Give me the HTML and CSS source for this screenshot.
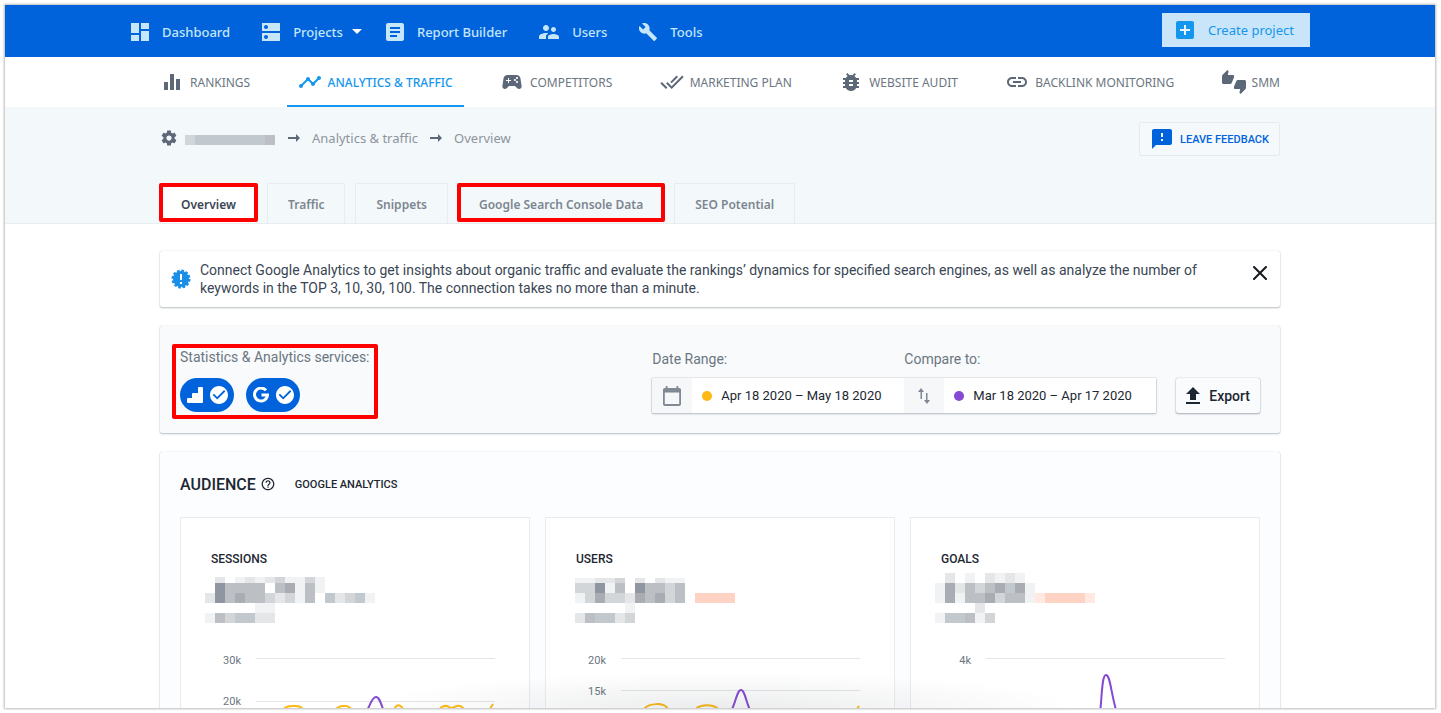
FILE: index.html
```html
<!DOCTYPE html>
<html lang="en">
<head>
  <meta charset="UTF-8" />
  <meta name="viewport" content="width=device-width, initial-scale=1.0"/>
  <title>Analytics &amp; Traffic - Overview</title>
  <link rel="stylesheet" href="styles.css">
</head>
<body>
  <div class="frame">
    <!-- Top bar -->
    <header class="topbar">
      <div class="topbar-inner">
        <nav class="main-nav">
          <a href="#"><svg width="18" height="18" viewBox="3 3 18 18"><path d="M3 13h8V3H3v10zm0 8h8v-6H3v6zm10 0h8V11h-8v10zm0-18v6h8V3h-8z"/></svg>Dashboard</a>
          <a href="#" class="has-menu"><svg width="18" height="18" viewBox="3 3 18 18"><path d="M21 13H3v8h18v-8zM7 19c-1.1 0-2-.9-2-2s.9-2 2-2 2 .9 2 2-.9 2-2 2zM21 3H3v8h18V3zM7 9c-1.1 0-2-.9-2-2s.9-2 2-2 2 .9 2 2-.9 2-2 2z"/></svg>Projects<svg class="caret" width="10" height="5" viewBox="0 0 10 5"><path d="M0 0h10L5 5z"/></svg></a>
          <a href="#"><svg width="18" height="18" viewBox="3 3 18 18"><path d="M19 3H5c-1.1 0-2 .9-2 2v14c0 1.1.9 2 2 2h14c1.1 0 2-.9 2-2V5c0-1.1-.9-2-2-2zm-5 14H7v-2h7v2zm3-4H7v-2h10v2zm0-4H7V7h10v2z"/></svg>Report Builder</a>
          <a href="#"><svg width="20" height="20" viewBox="2 2 20 20"><path d="M16.5 12c1.38 0 2.49-1.12 2.49-2.5S17.88 7 16.5 7C15.12 7 14 8.12 14 9.5s1.12 2.5 2.5 2.5zM9 11c1.66 0 2.99-1.34 2.99-3S10.66 5 9 5C7.34 5 6 6.34 6 8s1.34 3 3 3zm7.5 3c-1.83 0-5.5.92-5.5 2.75V19h11v-2.25c0-1.83-3.67-2.75-5.5-2.75zM9 13c-2.33 0-7 1.17-7 3.5V19h7v-2.25c0-.85.33-2.34 2.37-3.47C10.5 13.1 9.66 13 9 13z"/></svg>Users</a>
          <a href="#"><svg width="18" height="18" viewBox="1 1 22 22"><path d="M22.7 19l-9.1-9.1c.9-2.3.4-5-1.5-6.9-2-2-5-2.4-7.4-1.3L9 6 6 9 1.6 4.7C.4 7.1.9 10.1 2.9 12.1c1.9 1.9 4.6 2.4 6.9 1.5l9.1 9.1c.4.4 1 .4 1.4 0l2.3-2.3c.5-.4.5-1.1.1-1.4z"/></svg>Tools</a>
        </nav>
        <button class="create-btn"><svg width="18" height="18" viewBox="0 0 18 18"><rect width="18" height="18" rx="2" fill="#1596ee"/><path d="M8 4h2v4h4v2h-4v4H8v-4H4V8h4z" fill="#e9f5fd"/></svg>Create project</button>
      </div>
    </header>

    <!-- Section nav -->
    <nav class="sub-nav">
      <div class="sub-nav-inner">
        <a href="#"><svg width="24" height="24" viewBox="0 0 24 24"><path d="M4 12h4v8H4zM10 4h4v16h-4zM16 9h4v11h-4z"/></svg>RANKINGS</a>
        <a href="#" class="active"><svg width="24" height="24" viewBox="0 0 24 24"><path d="M23 8c0 1.1-.9 2-2 2-.18 0-.35-.02-.51-.07l-3.56 3.55c.05.16.07.34.07.52 0 1.1-.9 2-2 2s-2-.9-2-2c0-.18.02-.36.07-.52l-2.55-2.55c-.16.05-.34.07-.52.07s-.36-.02-.52-.07l-4.55 4.56c.05.16.07.33.07.51 0 1.1-.9 2-2 2s-2-.9-2-2 .9-2 2-2c.18 0 .35.02.51.07l4.56-4.55C8.02 9.36 8 9.18 8 9c0-1.1.9-2 2-2s2 .9 2 2c0 .18-.02.36-.07.52l2.55 2.55c.16-.05.34-.07.52-.07s.36.02.52.07l3.55-3.56C19.02 8.35 19 8.18 19 8c0-1.1.9-2 2-2s2 .9 2 2z"/></svg>ANALYTICS &amp; TRAFFIC</a>
        <a href="#"><svg width="24" height="24" viewBox="0 0 24 24"><path d="M21.58 16.09l-1.09-7.66C20.21 6.46 18.52 5 16.53 5H7.47C5.48 5 3.79 6.46 3.51 8.43l-1.09 7.66C2.2 17.63 3.39 19 4.94 19c.68 0 1.32-.27 1.8-.75L9 16h6l2.25 2.25c.48.48 1.13.75 1.8.75 1.56 0 2.75-1.37 2.53-2.91zM11 11H9v2H8v-2H6v-1h2V8h1v2h2v1zm4 0c-.55 0-1-.45-1-1s.45-1 1-1 1 .45 1 1-.45 1-1 1zm2 2c-.55 0-1-.45-1-1s.45-1 1-1 1 .45 1 1-.45 1-1 1zm0-4c-.55 0-1-.45-1-1s.45-1 1-1 1 .45 1 1-.45 1-1 1z"/></svg>COMPETITORS</a>
        <a href="#"><svg width="24" height="24" viewBox="0 0 24 24"><path d="M18 7l-1.41-1.41-6.34 6.34 1.41 1.41L18 7zm4.24-1.41L11.66 16.17 7.48 12l-1.41 1.41L11.66 19l12-12-1.42-1.41zM.41 13.41L6 19l1.41-1.41L1.83 12 .41 13.41z"/></svg>MARKETING PLAN</a>
        <a href="#"><svg width="24" height="24" viewBox="0 0 24 24"><path d="M20 8h-2.81c-.45-.78-1.07-1.45-1.82-1.96L17 4.41 15.59 3l-2.17 2.17C12.96 5.06 12.49 5 12 5c-.49 0-.96.06-1.41.17L8.41 3 7 4.41l1.62 1.63C7.88 6.55 7.26 7.22 6.81 8H4v2h2.09c-.05.33-.09.66-.09 1v1H4v2h2v1c0 .34.04.67.09 1H4v2h2.81c1.04 1.79 2.97 3 5.19 3s4.15-1.21 5.19-3H20v-2h-2.09c.05-.33.09-.66.09-1v-1h2v-2h-2v-1c0-.34-.04-.67-.09-1H20V8zm-6 8h-4v-2h4v2zm0-4h-4v-2h4v2z"/></svg>WEBSITE AUDIT</a>
        <a href="#"><svg width="24" height="24" viewBox="0 0 24 24"><path d="M3.9 12c0-1.71 1.39-3.1 3.1-3.1h4V7H7c-2.76 0-5 2.24-5 5s2.24 5 5 5h4v-1.9H7c-1.71 0-3.1-1.39-3.1-3.1zM8 13h8v-2H8v2zm9-6h-4v1.9h4c1.71 0 3.1 1.39 3.1 3.1s-1.39 3.1-3.1 3.1h-4V17h4c2.76 0 5-2.24 5-5s-2.24-5-5-5z"/></svg>BACKLINK MONITORING</a>
        <a href="#"><svg width="24" height="24" viewBox="0 0 24 24"><path d="M12 6c0-.55-.45-1-1-1H5.82l.66-3.18.02-.23c0-.31-.13-.59-.33-.8L5.38 0 .44 4.94C.17 5.21 0 5.59 0 6v6.5c0 .83.67 1.5 1.5 1.5h6.75c.62 0 1.15-.38 1.38-.91l2.26-5.29c.07-.17.11-.36.11-.55V6zm10.5 4h-6.75c-.62 0-1.15.38-1.38.91l-2.26 5.29c-.07.17-.11.36-.11.55V18c0 .55.45 1 1 1h5.18l-.66 3.18-.02.24c0 .31.13.59.33.8l.79.78 4.94-4.94c.27-.27.44-.65.44-1.06v-6.5c0-.83-.67-1.5-1.5-1.5z"/></svg>SMM</a>
      </div>
    </nav>

    <!-- Breadcrumbs and tabs -->
    <section class="page-head">
      <div class="container">
        <div class="head-row">
          <div class="breadcrumbs">
            <svg class="gear" width="18" height="18" viewBox="0 0 24 24"><path d="M19.43 12.98c.04-.32.07-.64.07-.98s-.03-.66-.07-.98l2.11-1.65c.19-.15.24-.42.12-.64l-2-3.46c-.12-.22-.39-.3-.61-.22l-2.49 1c-.52-.4-1.08-.73-1.69-.98l-.38-2.65C14.46 2.18 14.25 2 14 2h-4c-.25 0-.46.18-.49.42l-.38 2.65c-.61.25-1.17.59-1.69.98l-2.49-1c-.23-.09-.49 0-.61.22l-2 3.46c-.13.22-.07.49.12.64l2.11 1.65c-.04.32-.07.65-.07.98s.03.66.07.98l-2.11 1.65c-.19.15-.24.42-.12.64l2 3.46c.12.22.39.3.61.22l2.49-1c.52.4 1.08.73 1.69.98l.38 2.65c.03.24.24.42.49.42h4c.25 0 .46-.18.49-.42l.38-2.65c.61-.25 1.17-.59 1.69-.98l2.49 1c.23.09.49 0 .61-.22l2-3.46c.12-.22.07-.49-.12-.64l-2.11-1.65zM12 15.5c-1.93 0-3.5-1.57-3.5-3.5s1.57-3.5 3.5-3.5 3.5 1.57 3.5 3.5-1.57 3.5-3.5 3.5z"/></svg>
            <svg class="mosaic" width="91" height="14" data-rows=".........,3bbbbbbb4"></svg>
            <svg class="arrow" width="12" height="8" viewBox="0 0 12 8"><path d="M0 3h8V0l4 4-4 4V5H0z"/></svg>
            <a href="#">Analytics &amp; traffic</a>
            <svg class="arrow" width="12" height="8" viewBox="0 0 12 8"><path d="M0 3h8V0l4 4-4 4V5H0z"/></svg>
            <span>Overview</span>
          </div>
          <button class="feedback-btn"><svg width="20" height="20" viewBox="2 2 20 20"><path d="M20 2H4c-1.1 0-1.99.9-1.99 2L2 22l4-4h14c1.1 0 2-.9 2-2V4c0-1.1-.9-2-2-2zm-7 12h-2v-2h2v2zm0-4h-2V6h2v4z"/></svg>LEAVE FEEDBACK</button>
        </div>
        <div class="tabs">
          <a href="#" class="tab current marked">Overview</a>
          <a href="#" class="tab">Traffic</a>
          <a href="#" class="tab">Snippets</a>
          <a href="#" class="tab marked">Google Search Console Data</a>
          <a href="#" class="tab">SEO Potential</a>
        </div>
      </div>
    </section>

    <main class="container content">
      <div class="notice">
        <svg width="20" height="20" viewBox="0 0 20 20"><circle cx="10" cy="10" r="8" fill="#1a8fe8"/><circle cx="10" cy="10" r="8" fill="none" stroke="#1a8fe8" stroke-width="3" stroke-dasharray="2.6 1.59"/><path d="M9 5h2v6H9zM9 13h2v2H9z" fill="#fff"/></svg>
        <p>Connect Google Analytics to get insights about organic traffic and evaluate the rankings’ dynamics for specified search engines, as well as analyze the number of keywords in the TOP 3, 10, 30, 100. The connection takes no more than a minute.</p>
        <button class="close-btn" aria-label="Close"><svg width="14" height="14" viewBox="0 0 14 14"><path d="M1 1l12 12M13 1L1 13" stroke="#15191e" stroke-width="2" stroke-linecap="round"/></svg></button>
      </div>

      <!-- Services and dates -->
      <div class="filters">
        <div class="services marked">
          <div class="label">Statistics &amp; Analytics services:</div>
          <div class="pills">
            <button class="pill" aria-pressed="true" aria-label="Google Analytics">
              <svg width="16" height="16" viewBox="0 0 16 16"><path d="M11 1q0-1 1-1h3q1 0 1 1v14q0 1-1 1H1q-1 0-1-1v-3q0-1 1-1h4V7q0-1 1-1h5z"/></svg>
              <svg width="18" height="18" viewBox="2 2 20 20"><path d="M12 2C6.48 2 2 6.48 2 12s4.48 10 10 10 10-4.48 10-10S17.52 2 12 2zm-2 15l-5-5 1.41-1.41L10 14.17l7.59-7.59L19 8l-9 9z"/></svg>
            </button>
            <button class="pill" aria-pressed="true" aria-label="Google Search Console">
              <svg width="16" height="16" viewBox="0 0 16 16"><path d="M13 3.4A6.5 6.5 0 1 0 14.5 8H8.5" fill="none" stroke="#fff" stroke-width="3"/></svg>
              <svg width="18" height="18" viewBox="2 2 20 20"><path d="M12 2C6.48 2 2 6.48 2 12s4.48 10 10 10 10-4.48 10-10S17.52 2 12 2zm-2 15l-5-5 1.41-1.41L10 14.17l7.59-7.59L19 8l-9 9z"/></svg>
            </button>
          </div>
        </div>
        <div class="dates">
          <div class="date-labels">
            <span class="label" id="range-label">Date Range:</span>
            <span class="label" id="compare-label">Compare to:</span>
          </div>
          <div class="date-group">
            <span class="date-icon"><svg width="18" height="20" viewBox="2 1 20 22"><path d="M20 3h-1V1h-2v2H7V1H5v2H4c-1.1 0-2 .9-2 2v16c0 1.1.9 2 2 2h16c1.1 0 2-.9 2-2V5c0-1.1-.9-2-2-2zm0 18H4V8h16v13z"/></svg></span>
            <button class="date-btn" aria-describedby="range-label"><i class="dot current-period"></i>Apr 18 2020 – May 18 2020</button>
            <span class="date-icon"><svg width="12" height="16" viewBox="0 0 12 16"><path d="M3 0l3 4H4v7H2.5V4H0zM9 16l-3-4h2V5h1.5v7H12z"/></svg></span>
            <button class="date-btn" aria-describedby="compare-label"><i class="dot previous-period"></i>Mar 18 2020 – Apr 17 2020</button>
          </div>
        </div>
        <button class="export-btn"><svg width="14" height="17" viewBox="0 0 14 17"><path d="M7 0l7 7h-4v6H4V7H0zM0 15h14v2H0z"/></svg>Export</button>
      </div>

      <!-- Audience -->
      <section class="audience">
        <div class="audience-head">
          <h2>AUDIENCE</h2>
          <svg width="14" height="14" viewBox="1 1 22 22"><path d="M11 18h2v-2h-2v2zm1-16C6.48 2 2 6.48 2 12s4.48 10 10 10 10-4.48 10-10S17.52 2 12 2zm0 18c-4.41 0-8-3.59-8-8s3.59-8 8-8 8 3.59 8 8-3.59 8-8 8zm0-14c-2.21 0-4 1.79-4 4h2c0-1.1.9-2 2-2s2 .9 2 2c0 2-3 1.75-3 5h2c0-2.25 3-2.5 3-5 0-2.21-1.79-4-4-4z"/></svg>
          <span>GOOGLE ANALYTICS</span>
        </div>
        <div class="cards">
          <article class="card">
            <h3>SESSIONS</h3>
            <svg class="mosaic" width="180" height="50" data-cut="4" data-rows=".2.121231131,.64444.45141,26454432314.b23b1,.....11,143bb22"></svg>
            <svg class="chart" viewBox="0 0 300 120">
              <path class="grid" d="M51 9.5h239M51 52.5h239"/>
              <text x="36" y="15">30k</text><text x="36" y="56">20k</text>
              <path class="line previous" d="M156 66c8 0 9-18 15-18s7 22 14 22"/>
              <path class="line current" d="M75 66c4-9 8-9 14-9s8 0 12 9M128 66c3-10 9-9 13-9s6 4 9 9M188 66c2-13 8-13 13 0M233 66c1-10 8-10 11-8s4 0 8-1 8 2 8 9M285 60l3-5"/>
            </svg>
          </article>
          <article class="card">
            <h3>USERS</h3>
            <svg class="mosaic" width="180" height="50" data-x="5" data-cut="5" data-rows="11223.2.211,33614.64434,13533254534.pppp,.....1,24bb23"></svg>
            <svg class="chart" viewBox="0 0 300 120">
              <path class="grid" d="M51 9.5h239M51 41.5h239"/>
              <text x="36" y="15">20k</text><text x="36" y="46">15k</text>
              <path class="line previous" d="M158 66c7-5 8-25 13-25s6 22 14 27"/>
              <path class="line current" d="M74 60c5-6 20-7 24 0M126 60c4-5 18-5 22 0M287 60l2-3"/>
            </svg>
          </article>
          <article class="card">
            <h3>GOALS</h3>
            <svg class="mosaic" width="180" height="50" data-rows=".2.1.2121,1524345b51,1514453441oppppo,....2,1bb413"></svg>
            <svg class="chart" viewBox="0 0 300 120">
              <path class="grid" d="M51 9.5h239"/>
              <text x="36" y="15">4k</text>
              <path class="line previous" d="M164 70c3-12 2-44 7-44s5 24 13 44"/>
            </svg>
          </article>
        </div>
      </section>
    </main>
  </div>

  <script>
    // Masked values: every character is one 10px cell
    const shades = {
      1: '#f1f2f4', 2: '#e4e6e8', 3: '#d2d6d9', 4: '#bcc0c4', 5: '#a9adb3',
      6: '#8f96a2', b: '#c2c9ce', p: '#ffd3c3', o: '#ffe9e1'
    };

    document.querySelectorAll('.mosaic').forEach((svg) => {
      const left = Number(svg.dataset.x || 0);
      const cut = Number(svg.dataset.cut || 0);
      const rows = svg.dataset.rows.split(',');
      const first = rows.length === 2 ? 4 : 10;

      rows.forEach((row, r) => {
        [...row].forEach((cell, c) => {
          if (cell === '.') return;
          const rect = document.createElementNS('http://www.w3.org/2000/svg', 'rect');
          rect.setAttribute('x', left + c * 10);
          rect.setAttribute('y', r === 0 ? cut : first + (r - 1) * 10);
          rect.setAttribute('width', 10);
          rect.setAttribute('height', r === 0 ? first - cut : 10);
          rect.setAttribute('fill', shades[cell]);
          svg.appendChild(rect);
        });
      });
    });
  </script>
</body>
</html>
```
FILE: styles.css
```css
* {
  box-sizing: border-box;
}

body {
  margin: 0;
  padding: 5px 6px 5px 5px;
  background: #fff;
  color: #1d2731;
  font-family: Roboto, sans-serif;
  font-size: 14px;
}

a {
  text-decoration: none;
  color: inherit;
}

button {
  font-family: inherit;
  cursor: pointer;
  border: none;
  padding: 0;
}

svg {
  flex: none;
  fill: currentColor;
}

.frame {
  position: relative;
  height: calc(100vh - 10px);
  overflow: hidden;
  background: #fff;
  box-shadow: 0 0 2px 1px #bbb;
}

/* soft shade at the bottom edge */
.frame::after {
  content: "";
  position: absolute;
  left: 25%;
  right: 25%;
  bottom: 0;
  height: 36px;
  background: radial-gradient(ellipse 50% 100% at bottom, rgba(60,70,80,0.1), rgba(60,70,80,0));
  pointer-events: none;
}

.container {
  max-width: 1120px;
  margin: 0 auto;
}

/* Top bar */
.topbar {
  background: #0063db;
}

.topbar-inner {
  max-width: 1180px;
  margin: 0 auto;
  height: 52px;
  padding-left: 1px;
  display: flex;
  justify-content: space-between;
  align-items: center;
}

.main-nav {
  display: flex;
  gap: 32px;
  padding-top: 1px;
  font-family: "Noto Sans", sans-serif;
  font-size: 13px;
  font-weight: 500;
  color: #c5e6fb;
}

.main-nav a {
  display: flex;
  align-items: center;
  gap: 13px;
  white-space: nowrap;
}

.main-nav .has-menu {
  margin-right: -8px;
}

.main-nav .caret {
  color: #fff;
  margin-left: -4px;
}

.create-btn {
  width: 148px;
  height: 34px;
  display: flex;
  align-items: center;
  justify-content: space-between;
  padding: 0 16px 0 14px;
  margin-bottom: 2px;
  background: #c8e5f9;
  color: #1596ee;
  font-family: "Noto Sans", sans-serif;
  font-size: 13px;
}

/* Section nav */
.sub-nav-inner {
  max-width: 1120px;
  height: 50px;
  margin: 0 auto;
  display: flex;
  justify-content: space-between;
  font-family: "Noto Sans", sans-serif;
  font-size: 12px;
  color: #6b7681;
}

.sub-nav a {
  display: flex;
  align-items: center;
  gap: 6px;
  white-space: nowrap;
}

.sub-nav svg {
  color: #5c6877;
}

.sub-nav .active {
  padding: 2px 11px 0;
  margin: 0 -11px;
  font-weight: 500;
  color: #1596ee;
  border-bottom: 2px solid #1596ee;
}

.sub-nav .active svg {
  color: #1596ee;
}

/* Page head */
.page-head {
  background: #f3f8fb;
  border-bottom: 1px solid #e9edf0;
}

.head-row {
  display: flex;
  justify-content: space-between;
  align-items: center;
  padding: 15px 0 27px;
}

.breadcrumbs {
  display: flex;
  align-items: center;
  gap: 12px;
  padding-bottom: 2px;
  font-family: "Noto Sans", sans-serif;
  font-size: 13px;
  color: #8d959c;
}

.breadcrumbs .gear {
  color: #5c6877;
  margin-right: -5px;
}

.arrow {
  color: #5c6877;
}

.feedback-btn {
  height: 34px;
  display: flex;
  align-items: center;
  gap: 8px;
  padding: 0 10px 0 12px;
  border: 1px solid #e6eaed;
  border-radius: 2px;
  background: #f5f9fc;
  color: #0063db;
  font-size: 11px;
  font-weight: 500;
}

.tabs {
  display: flex;
  gap: 10px;
}

.tab {
  height: 40px;
  padding: 2px 20px 0;
  border: 1px solid #e9edf0;
  border-bottom: none;
  display: flex;
  align-items: center;
  font-family: "Noto Sans", sans-serif;
  font-size: 12px;
  font-weight: 600;
  color: #7d8690;
  white-space: nowrap;
}

.tab.current {
  background: #fff;
  color: #3a4654;
}

/* red highlight frames */
.marked {
  position: relative;
}

.marked::after {
  content: "";
  position: absolute;
  inset: -1px -2px 1px;
  border: 4px solid #f00;
  border-radius: 2px;
}

/* Content */
.content {
  padding-top: 27px;
}

.notice,
.filters,
.audience {
  border-radius: 2px;
  box-shadow: 0 0 1px rgba(60,75,90,0.3), 0 1px 2px rgba(60,75,90,0.35);
}

.notice {
  display: flex;
  align-items: center;
  gap: 9px;
  padding: 10px 13px 10px 11px;
  margin-bottom: 19px;
}

.notice p {
  flex: 1;
  margin: 0;
  line-height: 18px;
  color: #3a4654;
}

.close-btn {
  align-self: flex-start;
  margin-top: 5px;
  height: 14px;
  background: none;
}

.filters {
  display: flex;
  align-items: flex-end;
  gap: 20px;
  padding: 22px 20px 20px;
  margin-bottom: 19px;
  background: #f8fafc;
}

.label {
  color: #6b7681;
  line-height: 18px;
}

.services {
  margin-right: auto;
  padding-bottom: 1px;
}

.services.marked::after {
  inset: -4px -8px -6px;
}

.pills {
  display: flex;
  gap: 12px;
  margin-top: 12px;
}

.pill {
  width: 54px;
  height: 34px;
  border-radius: 17px;
  display: flex;
  align-items: center;
  justify-content: center;
  gap: 7px;
  background: #0063db;
  color: #fff;
}

.date-labels {
  display: flex;
  margin-bottom: 10px;
}

.date-labels .label {
  flex: 1;
}

.date-group {
  display: flex;
  height: 35px;
  background: #fff;
  box-shadow: 0 0 1px rgba(60,75,90,0.5), 0 1px 2px rgba(60,75,90,0.3);
}

.date-icon {
  width: 40px;
  display: flex;
  align-items: center;
  justify-content: center;
  background: #f5f7f9;
  color: #7f8893;
}

.date-btn {
  width: 212px;
  display: flex;
  align-items: center;
  gap: 9px;
  padding-left: 10px;
  background: #fff;
  color: #1d2731;
  font-size: 13px;
}

.dot {
  width: 10px;
  height: 10px;
  border-radius: 50%;
}

.current-period {
  background: #fdb913;
}

.previous-period {
  background: #8549d3;
}

.export-btn {
  height: 35px;
  display: flex;
  align-items: center;
  gap: 9px;
  padding: 0 10px;
  border-radius: 2px;
  background: #fafbfd;
  color: #1d2731;
  font-size: 14px;
  font-weight: 500;
  box-shadow: 0 0 1px rgba(60,75,90,0.5), 0 1px 2px rgba(60,75,90,0.4);
}

/* Audience */
.audience {
  padding: 22px 20px 20px;
  background: #fcfdff;
}

.audience-head {
  display: flex;
  align-items: center;
  gap: 5px;
  height: 20px;
  margin-bottom: 23px;
}

.audience h2 {
  margin: 0;
  font-size: 16px;
  font-weight: 500;
}

.audience-head span {
  margin-left: 15px;
  font-size: 11px;
  font-weight: 500;
}

.cards {
  display: grid;
  grid-template-columns: repeat(3, 1fr);
  gap: 15px;
}

.card {
  padding: 33px 24px 24px;
  border: 1px solid #e9ebee;
  background: #fff;
}

.card h3 {
  margin: 0 0 6px;
  padding-left: 6px;
  font-size: 12px;
  line-height: 16px;
  font-weight: 500;
}

.card .mosaic {
  display: block;
  margin-bottom: 26px;
}

.chart {
  display: block;
  width: 100%;
}

.chart text {
  font-size: 11px;
  fill: #6b7681;
  text-anchor: end;
}

.grid {
  stroke: #e3e5e7;
}

.line {
  fill: none;
  stroke-width: 2;
}

.line.current {
  stroke: #fdb913;
}

.line.previous {
  stroke: #8549d3;
}
```
